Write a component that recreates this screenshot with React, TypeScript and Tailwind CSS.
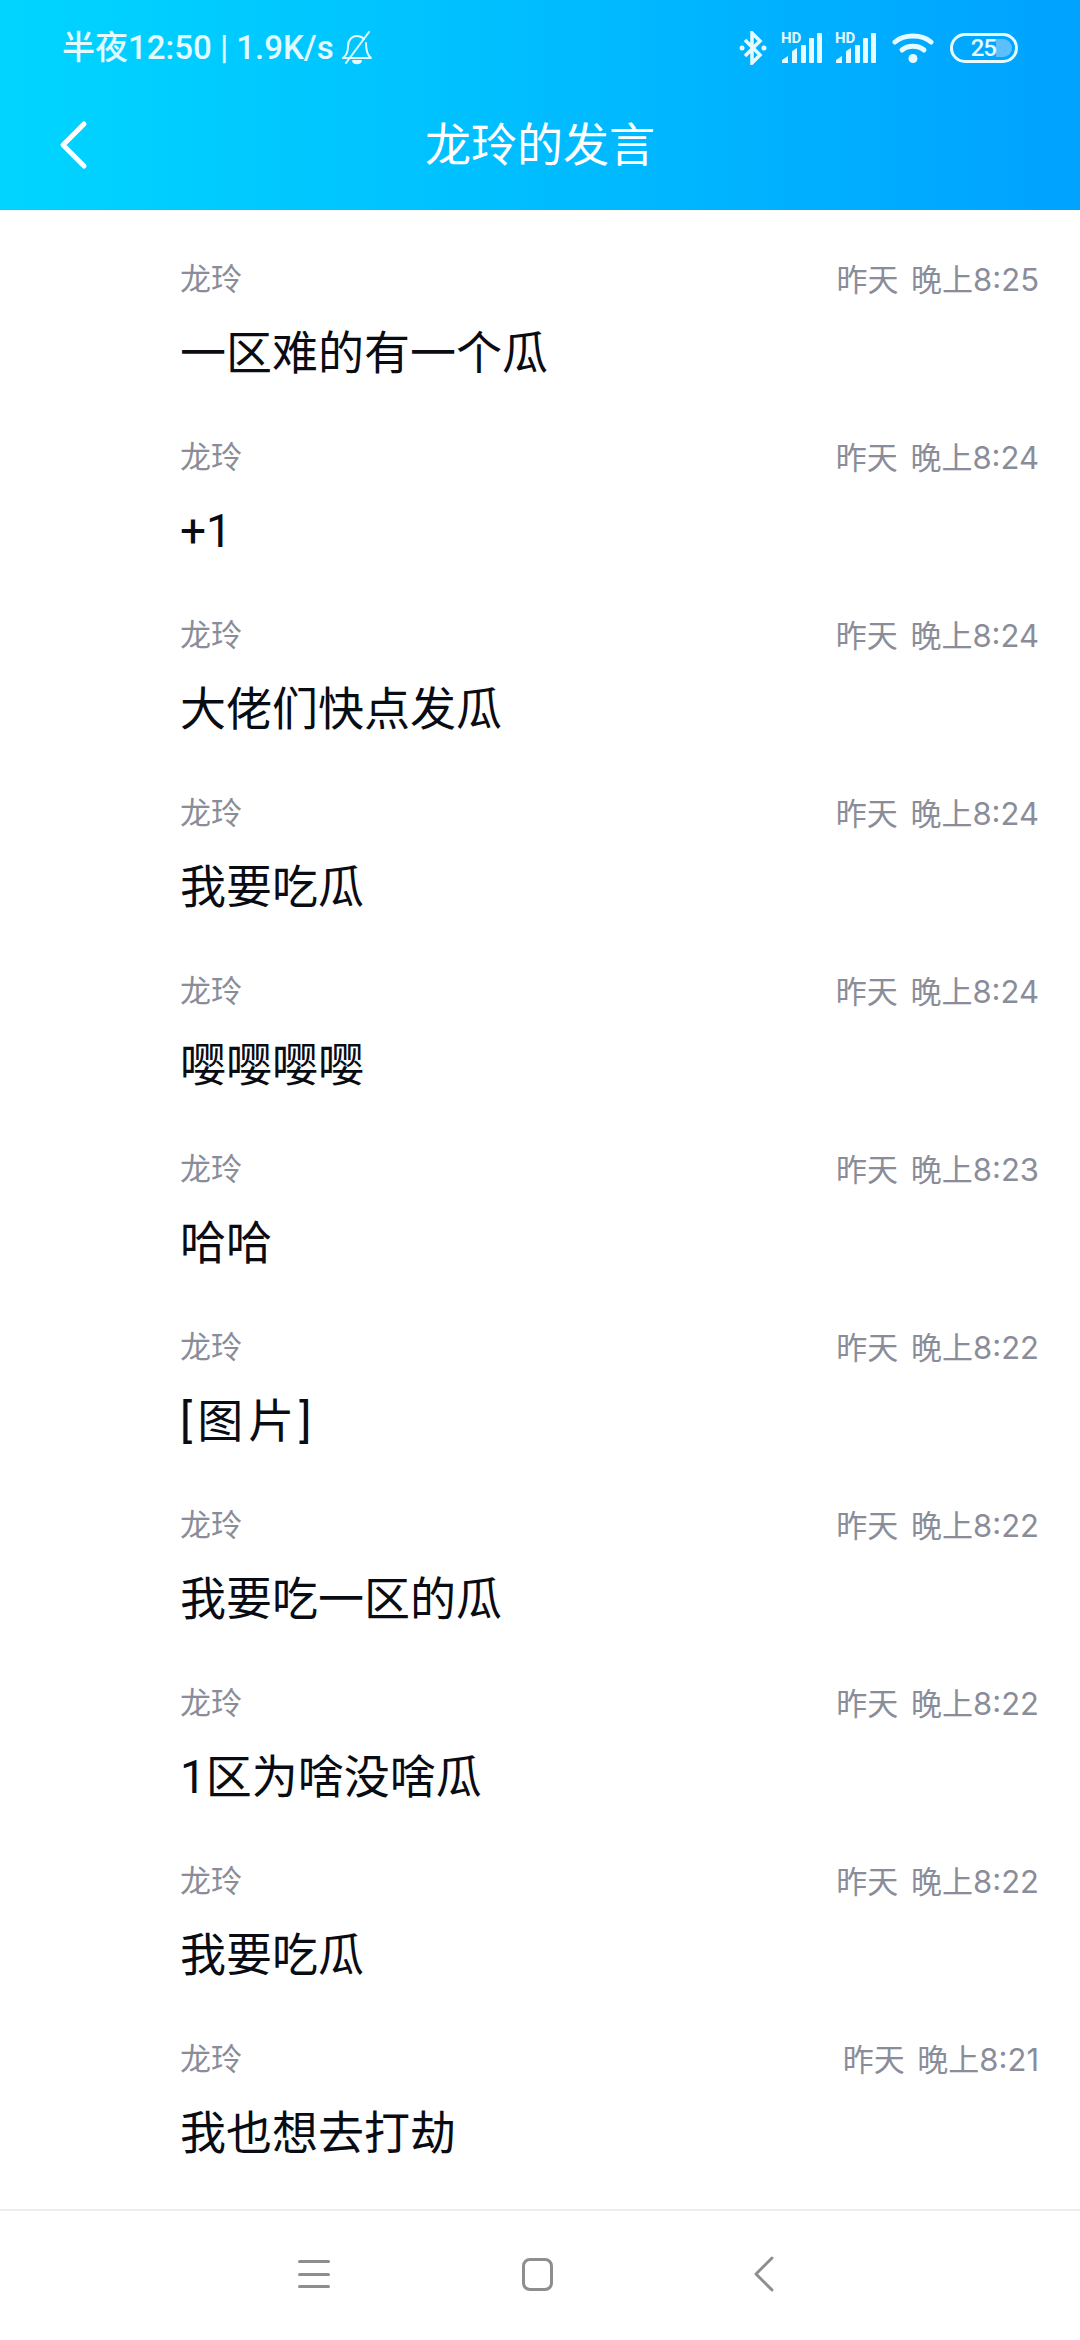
import React from 'react';

const fontStack = 'font-["Roboto","Noto_Sans_CJK_SC",sans-serif]';

const messages = [
    { text: '一区难的有一个瓜', time: '昨天 晚上8:25' },
    { text: '+1', time: '昨天 晚上8:24' },
    { text: '大佬们快点发瓜', time: '昨天 晚上8:24' },
    { text: '我要吃瓜', time: '昨天 晚上8:24' },
    { text: '嘤嘤嘤嘤', time: '昨天 晚上8:24' },
    { text: '哈哈', time: '昨天 晚上8:23' },
    { text: '[图片]', time: '昨天 晚上8:22', wide: true },
    { text: '我要吃一区的瓜', time: '昨天 晚上8:22' },
    { text: '1区为啥没啥瓜', time: '昨天 晚上8:22' },
    { text: '我要吃瓜', time: '昨天 晚上8:22' },
    { text: '我也想去打劫', time: '昨天 晚上8:21' },
];

const Signal: React.FC = () => (
    <svg className="overflow-visible" width="42" height="32" viewBox="0 0 42 32" fill="#e6fbff">
        <text x="0" y="11" fontSize="15" fontWeight="700" fontFamily="Roboto, sans-serif">HD</text>
        <path d="M1 31 L1 28 L7 24 L7 31 Z" />
        <path d="M11 31 L11 20 Q11 19 12 18.5 L16 16 L16 31 Z" />
        <rect x="20" y="13" width="5" height="18" rx="1" />
        <rect x="28" y="6" width="5" height="25" rx="1" />
        <rect x="36" y="1" width="5" height="30" rx="1" />
    </svg>
);

const StatusBar: React.FC = () => (
    <div className="flex h-[96px] items-center justify-between pl-[62px] pr-[62px]">
        <div className="flex items-center text-[33px] leading-[48px] font-medium text-[#e3fbff]">
            <span>半夜12:50 | 1.9K/s</span>
            <svg className="ml-[7px]" width="32" height="34" viewBox="0 0 32 34" fill="none" stroke="#e3fbff" strokeWidth="2" strokeLinecap="round" strokeLinejoin="round">
                <path d="M2 27 C6 24 7 20 7 15 C7 9 11 5 16 5 C19 5 21 6 23 8" />
                <path d="M25 12 C25 20 26 24 30 27 L2 27" />
                <path d="M28 1 L5 32" />
                <path d="M12 30 C13 33 19 33 20 30 Z" fill="#e3fbff" />
            </svg>
        </div>
        <div className="flex items-center">
            <svg width="28" height="34" viewBox="0 0 28 34" fill="none" stroke="#e6fbff" strokeWidth="3.5">
                <path d="M6 9 L21 24 L13 32 L13 2 L21 10 L6 25" />
                <circle cx="3" cy="17" r="2.5" fill="#e6fbff" stroke="none" />
                <circle cx="25" cy="17" r="2.5" fill="#e6fbff" stroke="none" />
            </svg>
            <div className="ml-[14px] flex gap-[12px]">
                <Signal />
                <Signal />
            </div>
            <svg className="ml-[15px]" width="42" height="30" viewBox="0 0 42 30" fill="none" stroke="#e6fbff" strokeWidth="5" strokeLinecap="round">
                <path d="M3 9 C12 1 30 1 39 9" />
                <path d="M10 17 C16 12 26 12 32 17" />
                <circle cx="21" cy="25.5" r="4.5" fill="#e6fbff" stroke="none" />
            </svg>
            <div className="relative ml-[16px] flex h-[30px] w-[68px] items-center justify-end overflow-hidden rounded-full border-[3px] border-[#e6fbff] pr-[19px] text-[24px] font-medium leading-none tracking-[-1px] text-[#e6fbff]">
                <div className="absolute right-[3px] top-[3px] h-[18px] w-[16px] rounded-r-full bg-[#5cc0ff]" />
                <span className="relative">25</span>
            </div>
        </div>
    </div>
);

const Header: React.FC = () => (
    <div className="relative flex h-[114px] items-center justify-center pb-[16px] text-[46px] text-white">
        <svg className="absolute left-[58px] top-[24px]" width="30" height="50" viewBox="0 0 30 50" fill="none" stroke="#ffffff" strokeWidth="5" strokeLinecap="round" strokeLinejoin="round">
            <path d="M26 4 L5 25 L26 46" />
        </svg>
        <span>龙玲的发言</span>
    </div>
);

const Row: React.FC<{ text: string; time: string; wide?: boolean }> = ({ text, time, wide }) => (
    <div className="flex h-[178px] flex-col pl-[180px] pr-[41px] pt-[49px]">
        <div className="flex h-[42px] items-center justify-between text-[31px] leading-[42px] text-[#8a8d99]">
            <span>龙玲</span>
            <span className='font-["Inter","Noto_Sans_CJK_SC",sans-serif] [word-spacing:4px]'>{time}</span>
        </div>
        <div className={`mt-[21px] text-[46px] leading-[62px] text-[#0a0c14] ${wide ? 'tracking-[5px]' : ''}`}>{text}</div>
    </div>
);

const NavBar: React.FC = () => (
    <div className="flex h-[131px] items-center border-t-2 border-[#ececec] pb-[3px]">
        <div className="ml-[298px] flex h-[28px] w-[32px] flex-col justify-between">
            <div className="h-[3px] rounded-full bg-[#8e8e8e]" />
            <div className="h-[3px] rounded-full bg-[#8e8e8e]" />
            <div className="h-[3px] rounded-full bg-[#8e8e8e]" />
        </div>
        <div className="ml-[192px] h-[33px] w-[31px] rounded-[8px] border-[3px] border-[#8e8e8e]" />
        <svg className="ml-[200px]" width="22" height="36" viewBox="0 0 22 36" fill="none" stroke="#8e8e8e" strokeWidth="3" strokeLinecap="round" strokeLinejoin="round">
            <path d="M19 2 L3 18 L19 34" />
        </svg>
    </div>
);

const App: React.FC = () => (
    <div className={`flex h-[2340px] w-[1080px] flex-col overflow-hidden bg-white ${fontStack}`}>
        <div className="bg-gradient-to-r from-[#00d5ff] via-[#00bdff] to-[#00a2ff]">
            <StatusBar />
            <Header />
        </div>
        <div className="flex-1">
            {messages.map((m, i) => (
                <Row key={i} text={m.text} time={m.time} wide={m.wide} />
            ))}
        </div>
        <NavBar />
    </div>
);

export default App;
